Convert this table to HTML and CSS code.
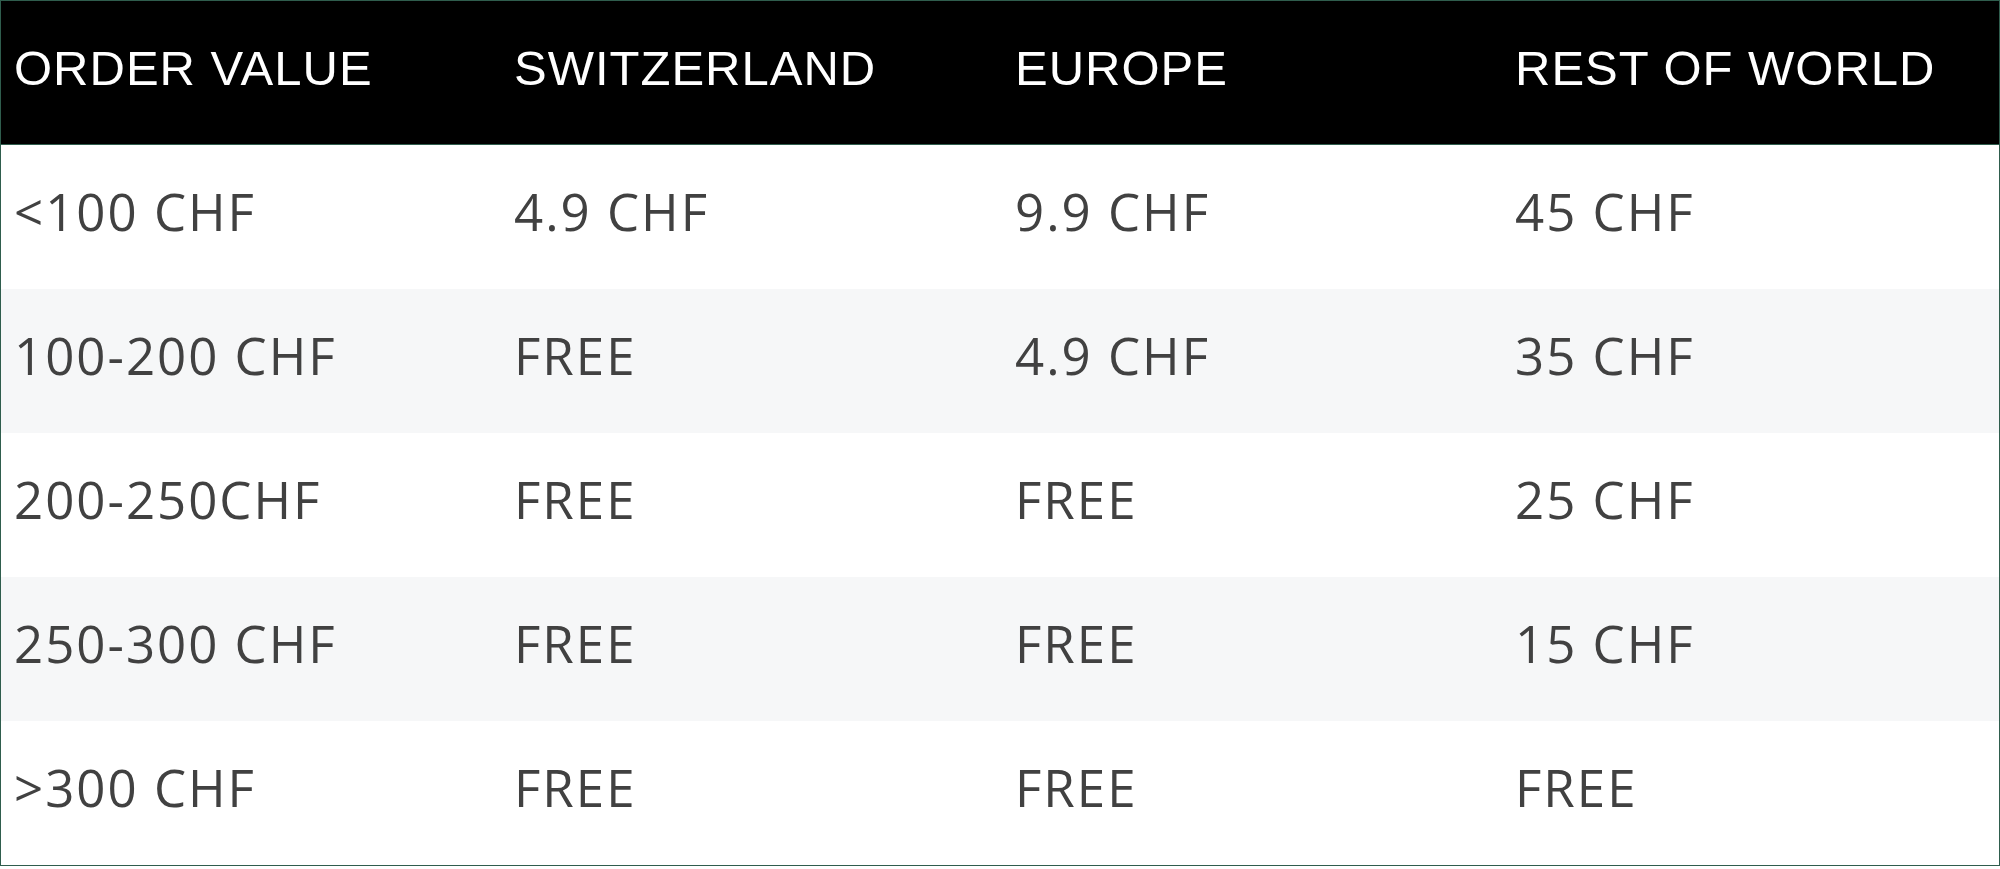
FILE: index.html
```html
<!DOCTYPE html>
<html>
<head>
<meta charset="utf-8">
<link rel="stylesheet" href="styles.css">
</head>
<body>
<div class="table">
  <div class="row head">
    <div class="cell">ORDER VALUE</div>
    <div class="cell">SWITZERLAND</div>
    <div class="cell">EUROPE</div>
    <div class="cell">REST OF WORLD</div>
  </div>
  <div class="row">
    <div class="cell">&lt;100 CHF</div>
    <div class="cell">4.9 CHF</div>
    <div class="cell">9.9 CHF</div>
    <div class="cell">45 CHF</div>
  </div>
  <div class="row alt">
    <div class="cell">100-200 CHF</div>
    <div class="cell">FREE</div>
    <div class="cell">4.9 CHF</div>
    <div class="cell">35 CHF</div>
  </div>
  <div class="row">
    <div class="cell">200-250CHF</div>
    <div class="cell">FREE</div>
    <div class="cell">FREE</div>
    <div class="cell">25 CHF</div>
  </div>
  <div class="row alt">
    <div class="cell">250-300 CHF</div>
    <div class="cell">FREE</div>
    <div class="cell">FREE</div>
    <div class="cell">15 CHF</div>
  </div>
  <div class="row">
    <div class="cell">&gt;300 CHF</div>
    <div class="cell">FREE</div>
    <div class="cell">FREE</div>
    <div class="cell">FREE</div>
  </div>
</div>
</body>
</html>
```

FILE: styles.css
```css
html, body {
  margin: 0;
  padding: 0;
  background: #ffffff;
}

.table {
  width: 2000px;
  box-sizing: border-box;
  border: 1px solid #2f5d4d;
}

.row {
  display: grid;
  grid-template-columns: 500px 501px 500px 1fr;
  height: 144px;
  align-items: center;
  background: #ffffff;
  color: #414141;
  font-family: "Open Sans", "Liberation Sans", sans-serif;
  font-size: 51px;
  letter-spacing: 2px;
  line-height: 1.2;
}

.row.alt {
  background: #f6f7f8;
}

.row.head {
  height: 143px;
  background: #000000;
  color: #ffffff;
  font-family: "Liberation Sans", Arial, sans-serif;
  font-size: 49px;
  letter-spacing: 1px;
  border-bottom: 1px solid #2f5d4d;
}

.cell {
  padding-left: 13px;
  padding-bottom: 10px;
  white-space: nowrap;
}

.row.head .cell {
  padding-bottom: 9px;
}
```
